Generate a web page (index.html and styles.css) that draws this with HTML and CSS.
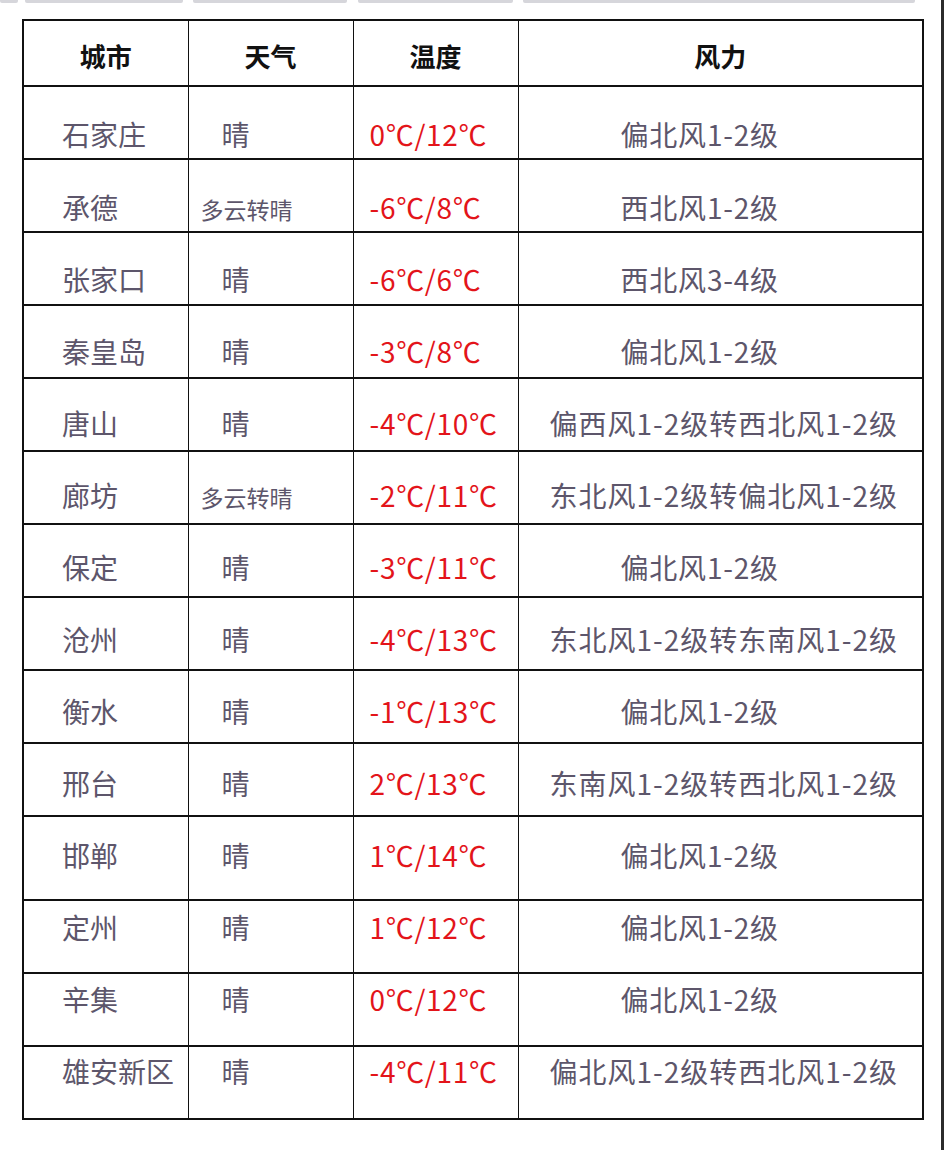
FILE: index.html
```html
<!DOCTYPE html>
<html lang="zh-CN">
<head>
<meta charset="utf-8">
<title>河北天气</title>
<link rel="stylesheet" href="styles.css">
</head>
<body>
<div class="page">
  <div class="tabs">
    <div class="tab t1"></div>
    <div class="tab t2"></div>
    <div class="tab t3"></div>
    <div class="tab t4"></div>
    <div class="tab t5"></div>
  </div>
  <table class="weather">
    <colgroup>
      <col class="c-city"><col class="c-sky"><col class="c-temp"><col class="c-wind">
    </colgroup>
    <thead>
      <tr><th>城市</th><th>天气</th><th>温度</th><th>风力</th></tr>
    </thead>
    <tbody>
      <tr><td class="city">石家庄</td><td class="sky">晴</td><td class="temp">0℃/12℃</td><td class="wind">偏北风1-2级</td></tr>
      <tr><td class="city">承德</td><td class="sky cloudy"><span>多云转晴</span></td><td class="temp">-6℃/8℃</td><td class="wind">西北风1-2级</td></tr>
      <tr><td class="city">张家口</td><td class="sky">晴</td><td class="temp">-6℃/6℃</td><td class="wind">西北风3-4级</td></tr>
      <tr><td class="city">秦皇岛</td><td class="sky">晴</td><td class="temp">-3℃/8℃</td><td class="wind">偏北风1-2级</td></tr>
      <tr><td class="city">唐山</td><td class="sky">晴</td><td class="temp">-4℃/10℃</td><td class="wind long">偏西风1-2级转西北风1-2级</td></tr>
      <tr><td class="city">廊坊</td><td class="sky cloudy"><span>多云转晴</span></td><td class="temp">-2℃/11℃</td><td class="wind long">东北风1-2级转偏北风1-2级</td></tr>
      <tr><td class="city">保定</td><td class="sky">晴</td><td class="temp">-3℃/11℃</td><td class="wind">偏北风1-2级</td></tr>
      <tr><td class="city">沧州</td><td class="sky">晴</td><td class="temp">-4℃/13℃</td><td class="wind long">东北风1-2级转东南风1-2级</td></tr>
      <tr><td class="city">衡水</td><td class="sky">晴</td><td class="temp">-1℃/13℃</td><td class="wind">偏北风1-2级</td></tr>
      <tr><td class="city">邢台</td><td class="sky">晴</td><td class="temp">2℃/13℃</td><td class="wind long">东南风1-2级转西北风1-2级</td></tr>
      <tr class="tall"><td class="city">邯郸</td><td class="sky">晴</td><td class="temp">1℃/14℃</td><td class="wind">偏北风1-2级</td></tr>
      <tr><td class="city">定州</td><td class="sky">晴</td><td class="temp">1℃/12℃</td><td class="wind">偏北风1-2级</td></tr>
      <tr><td class="city">辛集</td><td class="sky">晴</td><td class="temp">0℃/12℃</td><td class="wind">偏北风1-2级</td></tr>
      <tr><td class="city">雄安新区</td><td class="sky">晴</td><td class="temp">-4℃/11℃</td><td class="wind long">偏北风1-2级转西北风1-2级</td></tr>
    </tbody>
  </table>
</div>
<div class="edge"></div>
</body>
</html>
```

FILE: styles.css
```css
html, body {
  margin: 0;
  padding: 0;
  background: #ffffff;
}

body {
  width: 944px;
  height: 1150px;
  display: flex;
  overflow: hidden;
  font-family: "Noto Sans CJK SC", "Noto Sans", sans-serif;
}

.page {
  flex: 1;
}

.edge {
  width: 3px;
  background: #2b2b2b;
}

/* faint bars along the top edge */
.tabs {
  display: flex;
  height: 3px;
}

.tab {
  height: 3px;
  background: #d6d6db;
  border-radius: 0 0 2px 2px;
}

.t1 { width: 18px; }
.t2 { width: 158px; margin-left: 7px; }
.t3 { width: 154px; margin-left: 10px; }
.t4 { width: 155px; margin-left: 11px; }
.t5 { width: 392px; margin-left: 10px; }

.weather {
  margin: 16px 0 0 22px;
  width: 900px;
  border-collapse: collapse;
  table-layout: fixed;
  border: 2px solid #111111;
}

.c-city, .c-sky, .c-temp { width: 165px; }
.c-wind { width: 405px; }

.weather th,
.weather td {
  border-left: 1px solid #111111;
  border-right: 1px solid #111111;
  border-top: 2px solid #111111;
  border-bottom: 2px solid #111111;
  padding: 0;
  white-space: nowrap;
}

.weather thead tr {
  height: 66px;
}

.weather th {
  font-size: 26px;
  font-weight: 700;
  color: #111111;
  text-align: center;
  vertical-align: middle;
  padding-top: 5px;
  line-height: 32px;
}

.weather tbody tr {
  height: 73px;
}

.weather tbody tr.tall {
  height: 84px;
}

.weather td {
  vertical-align: top;
  text-align: left;
  font-size: 28px;
  line-height: 32px;
  color: #5d566b;
}

.weather tbody tr:nth-child(1) td { padding-top: 31px; }
.weather tbody tr:nth-child(2) td { padding-top: 31px; }
.weather tbody tr:nth-child(3) td { padding-top: 30px; }
.weather tbody tr:nth-child(4) td { padding-top: 29px; }
.weather tbody tr:nth-child(5) td { padding-top: 28px; }
.weather tbody tr:nth-child(6) td { padding-top: 27px; }
.weather tbody tr:nth-child(7) td { padding-top: 26px; }
.weather tbody tr:nth-child(8) td { padding-top: 25px; }
.weather tbody tr:nth-child(9) td { padding-top: 24px; }
.weather tbody tr:nth-child(10) td { padding-top: 23px; }
.weather tbody tr:nth-child(11) td { padding-top: 22px; }
.weather tbody tr:nth-child(12) td { padding-top: 10px; }
.weather tbody tr:nth-child(13) td { padding-top: 9px; }
.weather tbody tr:nth-child(14) td { padding-top: 8px; }

.weather td.city { padding-left: 38px; }
.weather td.sky { padding-left: 33px; }
.weather td.sky.cloudy { padding-left: 12px; }
.weather td.sky.cloudy span { font-size: 23px; }
.weather td.temp { padding-left: 16px; color: #e3141a; letter-spacing: 0.7px; }
.weather td.wind { padding-left: 102px; letter-spacing: 0.8px; }
.weather td.wind.long { padding-left: 31px; letter-spacing: 1px; }
```
